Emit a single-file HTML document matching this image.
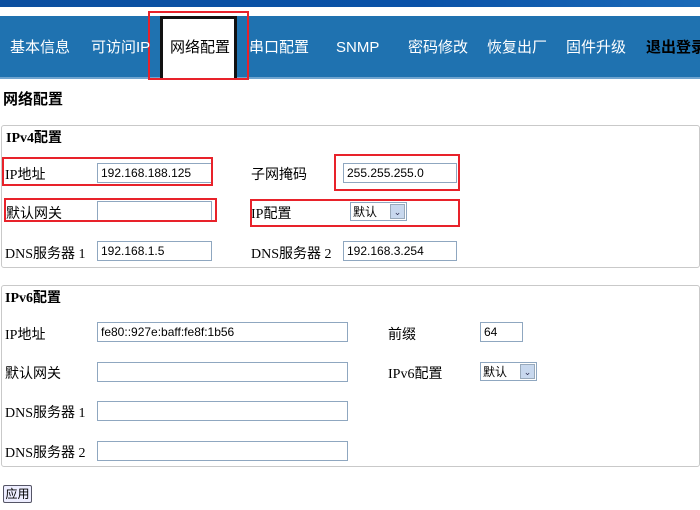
<!DOCTYPE html>
<html><head><meta charset="utf-8"><style>
*{margin:0;padding:0;box-sizing:border-box}
body{width:700px;height:510px;background:#fff;position:relative;overflow:hidden;font-family:"Liberation Serif","Noto Sans CJK SC",serif;font-size:14px;color:#000}
.a{position:absolute;white-space:nowrap}
.nav{position:absolute;left:0;top:16px;width:700px;height:63px;background:#1f72b0;border-bottom:2px solid #6fa4cf}
.ni{position:absolute;top:39px;white-space:nowrap;font-family:"Liberation Sans","Noto Sans CJK SC",sans-serif;font-size:15px;color:#fff;line-height:18px}
.red{position:absolute;border:2px solid #e8222a}
.inp{position:absolute;border:1px solid #8fa7c0;background:#fff;font-family:"Liberation Sans",sans-serif;font-size:12px;padding-left:3px;line-height:18px;height:20px}
.box{position:absolute;left:1px;width:699px;border:1px solid #c9c9c9;border-radius:3px}
.sel{position:absolute;border:1px solid #8fa7c0;background:#fff;font-size:12px;height:19px;line-height:17px;padding-left:2px;font-family:"Noto Sans CJK SC",sans-serif}
.sel i{position:absolute;right:1px;top:1px;width:15px;height:15px;background:#c8d8ee;border:1px solid #9ab;font-style:normal;font-size:9px;color:#335;text-align:center;line-height:13px}
</style></head><body>
<div class="a" style="left:0;top:0;width:700px;height:7px;background:linear-gradient(90deg,#0b4fa0,#0a52a8 60%,#1a6ab8)"></div>
<div class="nav"></div>
<div class="a" style="left:160px;top:16px;width:77px;height:62px;background:#fff;border:3px solid #111;border-bottom:none"></div>
<div class="red" style="left:148px;top:11px;width:101px;height:69px"></div>
<div class="ni" style="left:10px">基本信息</div>
<div class="ni" style="left:91px">可访问IP</div>
<div class="ni" style="left:170px;color:#000">网络配置</div>
<div class="ni" style="left:249px">串口配置</div>
<div class="ni" style="left:336px">SNMP</div>
<div class="ni" style="left:408px">密码修改</div>
<div class="ni" style="left:487px">恢复出厂</div>
<div class="ni" style="left:566px">固件升级</div>
<div class="ni" style="left:646px;color:#000;font-weight:bold">退出登录</div>
<div class="a" style="left:3px;top:88px;font-size:15px;font-weight:bold">网络配置</div>

<div class="box" style="top:125px;height:143px"></div>
<div class="a" style="left:6px;top:127px;font-weight:bold">IPv4配置</div>
<div class="a" style="left:5px;top:164px">IP地址</div>
<div class="inp" style="left:97px;top:163px;width:115px">192.168.188.125</div>
<div class="red" style="left:2px;top:157px;width:211px;height:29px"></div>
<div class="a" style="left:251px;top:164px">子网掩码</div>
<div class="inp" style="left:343px;top:163px;width:114px">255.255.255.0</div>
<div class="red" style="left:334px;top:154px;width:126px;height:37px"></div>
<div class="a" style="left:6px;top:203px">默认网关</div>
<div class="inp" style="left:97px;top:201px;width:115px"></div>
<div class="red" style="left:4px;top:198px;width:213px;height:24px"></div>
<div class="a" style="left:251px;top:203px">IP配置</div>
<div class="sel" style="left:350px;top:202px;width:57px">默认<i>⌄</i></div>
<div class="red" style="left:250px;top:199px;width:210px;height:28px"></div>
<div class="a" style="left:5px;top:243px">DNS服务器 1</div>
<div class="inp" style="left:97px;top:241px;width:115px">192.168.1.5</div>
<div class="a" style="left:251px;top:243px">DNS服务器 2</div>
<div class="inp" style="left:343px;top:241px;width:114px">192.168.3.254</div>

<div class="box" style="top:285px;height:182px"></div>
<div class="a" style="left:5px;top:287px;font-weight:bold">IPv6配置</div>
<div class="a" style="left:5px;top:324px">IP地址</div>
<div class="inp" style="left:97px;top:322px;width:251px">fe80::927e:baff:fe8f:1b56</div>
<div class="a" style="left:388px;top:324px">前缀</div>
<div class="inp" style="left:480px;top:322px;width:43px">64</div>
<div class="a" style="left:5px;top:363px">默认网关</div>
<div class="inp" style="left:97px;top:362px;width:251px"></div>
<div class="a" style="left:388px;top:363px">IPv6配置</div>
<div class="sel" style="left:480px;top:362px;width:57px">默认<i>⌄</i></div>
<div class="a" style="left:5px;top:402px">DNS服务器 1</div>
<div class="inp" style="left:97px;top:401px;width:251px"></div>
<div class="a" style="left:5px;top:442px">DNS服务器 2</div>
<div class="inp" style="left:97px;top:441px;width:251px"></div>

<div class="a" style="left:3px;top:485px;width:29px;height:18px;border:1px solid #556;border-radius:2px;background:#eef;font-size:12px;line-height:16px;text-align:center;font-family:'Noto Sans CJK SC',sans-serif">应用</div>
</body></html>
